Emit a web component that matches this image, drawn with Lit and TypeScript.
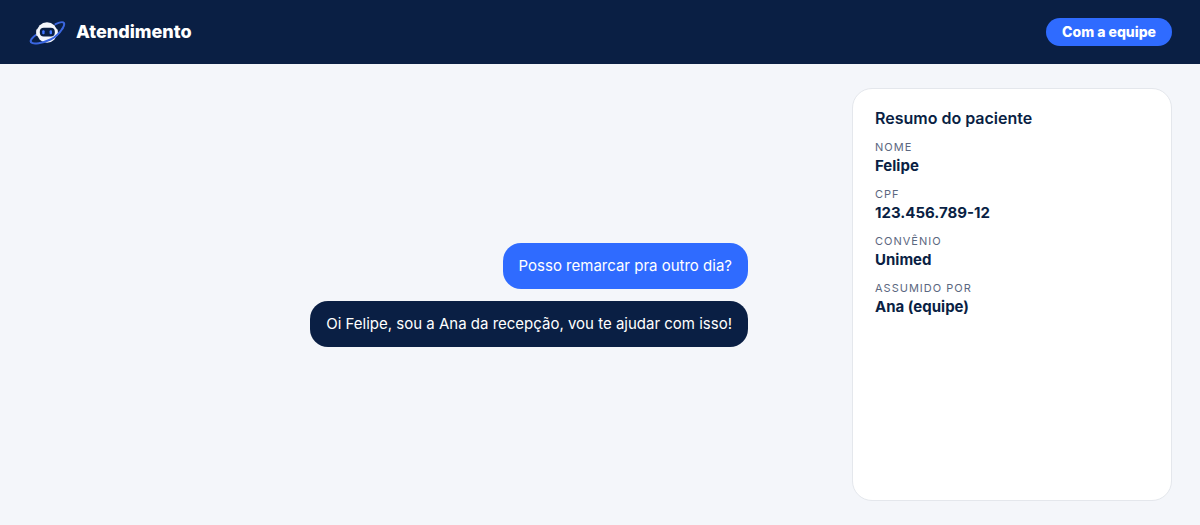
import { LitElement, html, css } from "lit";
import { customElement, state, property } from "lit/decorators.js";
import { classMap } from "lit/directives/class-map.js";

interface Message {
  from: "patient" | "team";
  text: string;
}

interface Field {
  label: string;
  value: string;
}

@customElement("bot-logo")
export class BotLogo extends LitElement {
  static styles = css`
    :host {
      display: block;
      width: 36px;
      height: 36px;
    }

    svg {
      display: block;
      width: 100%;
      height: 100%;
      overflow: visible;
    }
  `;

  render() {
    return html`
      <svg viewBox="0 0 36 36" fill="none" aria-hidden="true">
        <path
          d="M8.500 20.500C4 23.500 1.800 26.500 3 28.200M27.500 10.200C32 8 35 7.400 36 9C36.600 10.200 35.800 12.500 34.500 14.500"
          stroke="#3a66e0"
          stroke-width="2"
          stroke-linecap="round"
        />
        <rect x="8" y="15" width="3" height="7" rx="1.500" fill="#c9cfdd" />
        <rect x="27" y="15" width="3" height="7" rx="1.500" fill="#c9cfdd" />
        <circle cx="19" cy="18.500" r="10.200" fill="#f4f6fb" />
        <rect x="11.800" y="13.800" width="15" height="8.800" rx="4" fill="#0a1f44" />
        <rect x="14.200" y="16.200" width="2.400" height="4" rx="1" fill="#3f74ff" />
        <rect x="21.600" y="16.200" width="2.400" height="4" rx="1" fill="#3f74ff" />
        <path
          d="M3 28.200C5 30.800 15 29 22.500 25.500C28 22.800 32 18.500 34.500 14.500"
          stroke="#3a66e0"
          stroke-width="2"
          stroke-linecap="round"
        />
      </svg>
    `;
  }
}

@customElement("chat-bubble")
export class ChatBubble extends LitElement {
  @property({ type: String })
  from: string = "patient";

  static styles = css`
    :host {
      display: block;
    }

    .bubble {
      padding: 11px 16px;
      border-radius: 18px;
      color: #ffffff;
      font-size: 15px;
      line-height: 24px;
      background-color: #2f6bff;
    }

    .bubble.team {
      background-color: #0a1f44;
    }
  `;

  render() {
    return html`
      <div class=${classMap({ bubble: true, team: this.from === "team" })}>
        <slot></slot>
      </div>
    `;
  }
}

@customElement("app-root")
export class AppRoot extends LitElement {
  @state()
  private messages: Array<Message> = [
    { from: "patient", text: "Posso remarcar pra outro dia?" },
    {
      from: "team",
      text: "Oi Felipe, sou a Ana da recepção, vou te ajudar com isso!",
    },
  ];

  @state()
  private fields: Array<Field> = [
    { label: "Nome", value: "Felipe" },
    { label: "CPF", value: "123.456.789-12" },
    { label: "Convênio", value: "Unimed" },
    { label: "Assumido por", value: "Ana (equipe)" },
  ];

  static styles = css`
    * {
      margin: 0;
      padding: 0;
      box-sizing: border-box;
    }

    :host {
      display: flex;
      flex-direction: column;
      min-height: 100vh;
      color: #0a1f44;
      font-family: Inter, "Liberation Sans", sans-serif;
      background-color: #f4f6fa;
    }

    .topbar {
      display: flex;
      justify-content: space-between;
      align-items: center;
      height: 64px;
      padding: 0 28px;
      color: #ffffff;
      background-color: #0a1f44;
    }

    .brand {
      display: flex;
      align-items: center;
      gap: 12px;
    }

    .brand_name {
      font-size: 18px;
      font-weight: 800;
      line-height: 24px;
    }

    .status {
      padding: 4px 16px;
      border-radius: 14px;
      font-size: 14px;
      font-weight: 800;
      line-height: 20px;
      background-color: #2f6bff;
    }

    .content {
      flex: 1;
      display: grid;
      grid-template-columns: minmax(0, 1fr) 320px;
      gap: 24px;
      padding: 24px 28px;
    }

    .chat {
      display: flex;
      flex-direction: column;
      justify-content: center;
      align-items: flex-end;
      gap: 12px;
      width: 100%;
      max-width: 640px;
      margin: 0 auto;
    }

    .card {
      padding: 20px 22px;
      border: 1px solid #e4e7ec;
      border-radius: 20px;
      background-color: #ffffff;
    }

    .card_title {
      margin-bottom: 12px;
      font-size: 16px;
      font-weight: 600;
      line-height: 18px;
    }

    .fields {
      display: flex;
      flex-direction: column;
      gap: 9px;
    }

    dt {
      color: #5b6780;
      font-size: 11px;
      line-height: 16px;
      letter-spacing: 1px;
      text-transform: uppercase;
    }

    dd {
      font-size: 15px;
      font-weight: 700;
      line-height: 22px;
    }
  `;

  render() {
    return html`
      <header class="topbar">
        <div class="brand">
          <bot-logo></bot-logo>
          <h1 class="brand_name">Atendimento</h1>
        </div>
        <span class="status">Com a equipe</span>
      </header>
      <main class="content">
        <section class="chat">
          ${this.messages.map(
            (item) => html`
              <chat-bubble from=${item.from}>${item.text}</chat-bubble>
            `
          )}
        </section>
        <aside class="card">
          <h2 class="card_title">Resumo do paciente</h2>
          <dl class="fields">
            ${this.fields.map(
              (item) => html`
                <div>
                  <dt>${item.label}</dt>
                  <dd>${item.value}</dd>
                </div>
              `
            )}
          </dl>
        </aside>
      </main>
    `;
  }
}
